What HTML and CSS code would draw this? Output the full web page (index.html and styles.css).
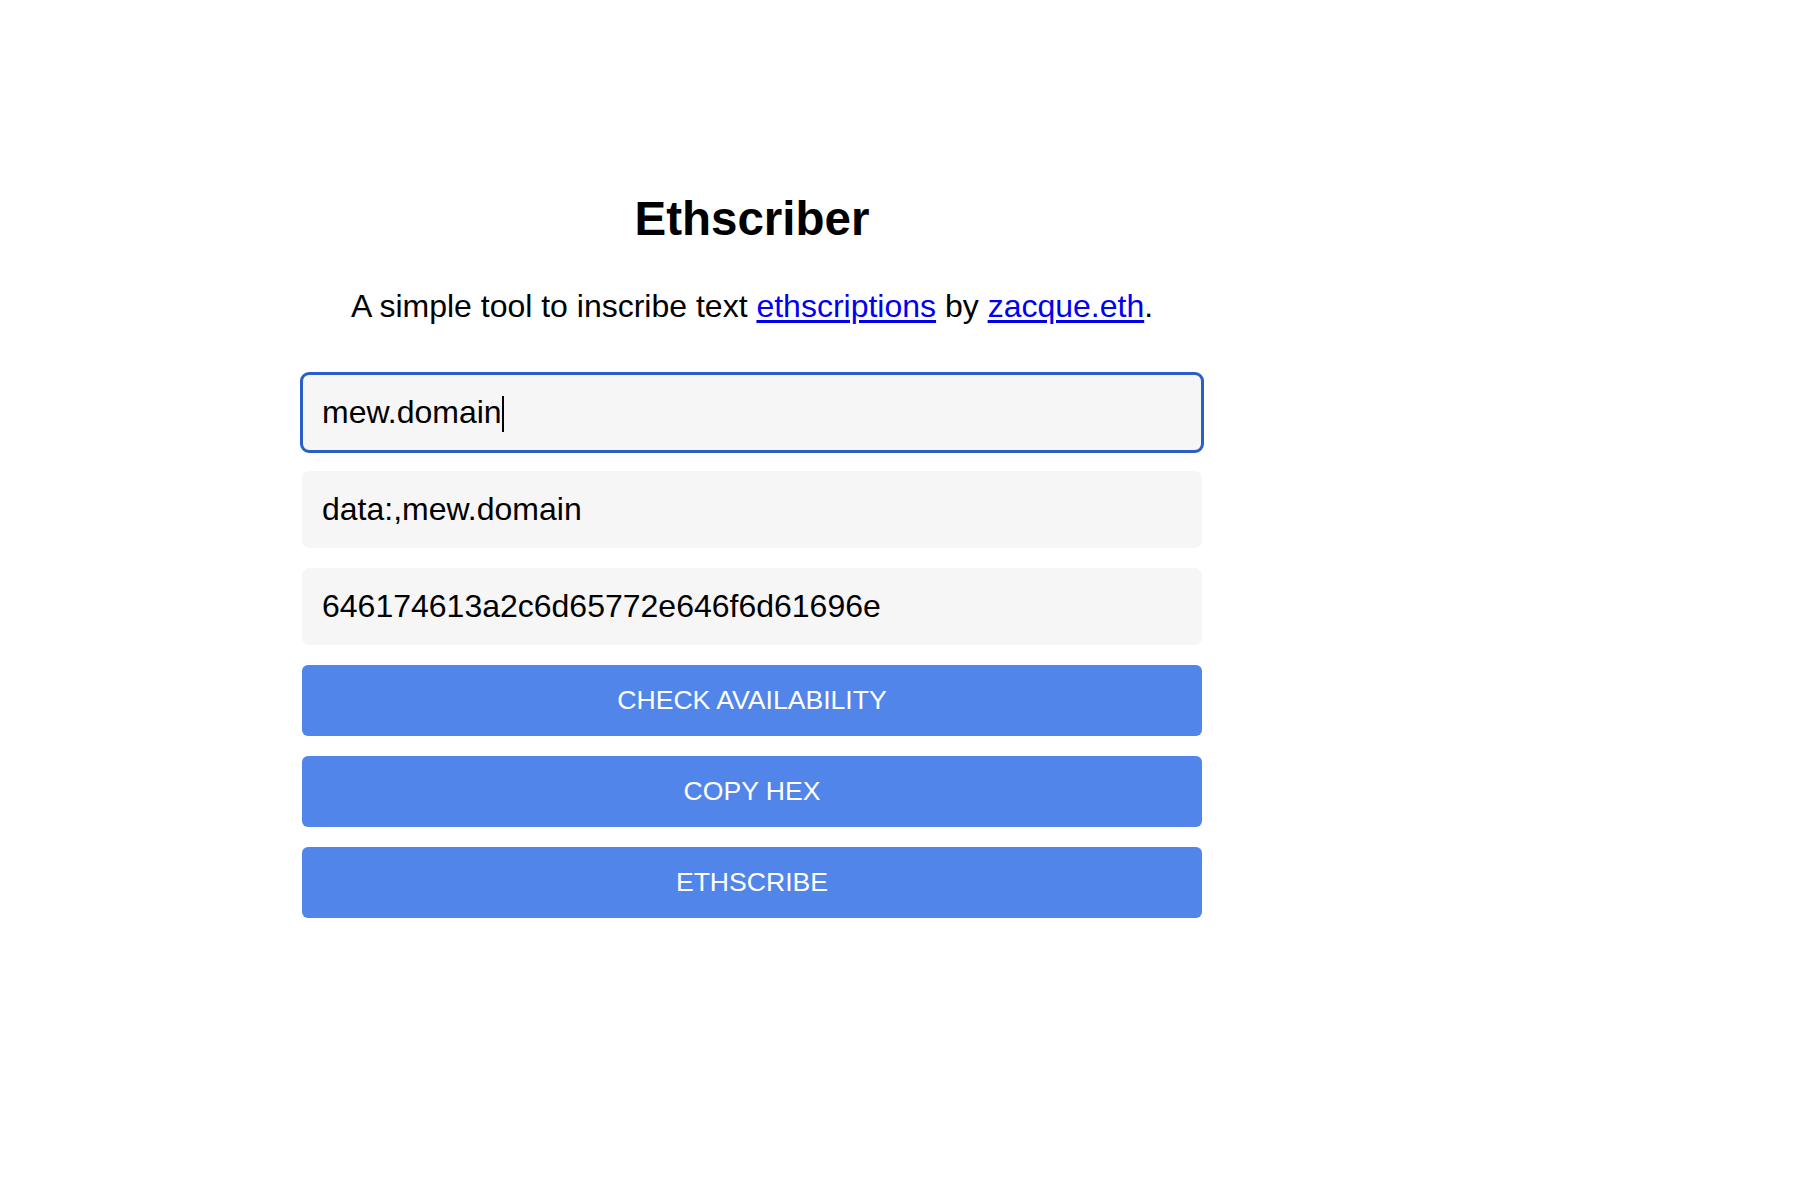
FILE: index.html
```html
<!DOCTYPE html>
<html lang="en">
<head>
<meta charset="utf-8">
<title>Ethscriber</title>
<link rel="stylesheet" href="styles.css">
</head>
<body>
<main class="app">
  <h1 class="title">Ethscriber</h1>
  <p class="intro">A simple tool to inscribe text <a href="#">ethscriptions</a> by <a href="#">zacque.eth</a>.</p>
  <div class="form">
    <div class="field-wrap">
      <input class="field field-focused" type="text" value="mew.domain">
      <div class="caret-layer" aria-hidden="true"><span class="caret-text">mew.domain</span><span class="caret"></span></div>
    </div>
    <input class="field" type="text" value="data:,mew.domain" readonly>
    <input class="field" type="text" value="646174613a2c6d65772e646f6d61696e" readonly>
    <button class="btn" type="button">CHECK AVAILABILITY</button>
    <button class="btn" type="button">COPY HEX</button>
    <button class="btn" type="button">ETHSCRIBE</button>
  </div>
</main>
</body>
</html>
```
FILE: styles.css
```css
html, body {
  margin: 0;
  padding: 0;
  background: #ffffff;
}
body {
  font-family: "Liberation Sans", Arial, Helvetica, sans-serif;
  color: #000000;
}
.app {
  width: 900px;
  margin-left: 302px;
  padding-top: 191px;
}
.title {
  margin: 0;
  font-size: 47.5px;
  line-height: 56px;
  font-weight: 700;
  text-align: center;
}
.intro {
  margin: 40px 0 0;
  font-size: 32px;
  line-height: 38px;
  text-align: center;
}
.intro a {
  color: #0000ee;
  text-decoration: underline;
  text-underline-offset: 3px;
}
.form {
  margin-top: 49px;
  display: flex;
  flex-direction: column;
  gap: 20px;
}
.field-wrap {
  position: relative;
}
.field {
  display: block;
  box-sizing: border-box;
  width: 100%;
  height: 77px;
  margin: 0;
  padding: 0 20px;
  border: 0;
  border-radius: 7px;
  background: #f6f6f6;
  font-family: "Liberation Sans", Arial, Helvetica, sans-serif;
  font-size: 32px;
  color: #000000;
  caret-color: transparent;
  outline: none;
}
.field-focused,
.field-focused:focus {
  outline: 3px solid #2a5fc7;
  outline-offset: -1px;
}
.caret-layer {
  position: absolute;
  top: 0;
  left: 0;
  right: 0;
  bottom: 0;
  box-sizing: border-box;
  padding: 0 20px;
  display: flex;
  align-items: center;
  pointer-events: none;
  font-size: 32px;
  white-space: pre;
}
.caret-text {
  color: transparent;
}
.caret {
  display: block;
  width: 2px;
  height: 36px;
  margin-top: 2px;
  background: #000000;
}
.btn {
  box-sizing: border-box;
  width: 100%;
  height: 71px;
  margin: 0;
  padding: 0;
  border: 0;
  border-radius: 6px;
  background: #5285ea;
  color: #ffffff;
  font-family: "Liberation Sans", Arial, Helvetica, sans-serif;
  font-size: 26.6px;
  cursor: pointer;
}
```
